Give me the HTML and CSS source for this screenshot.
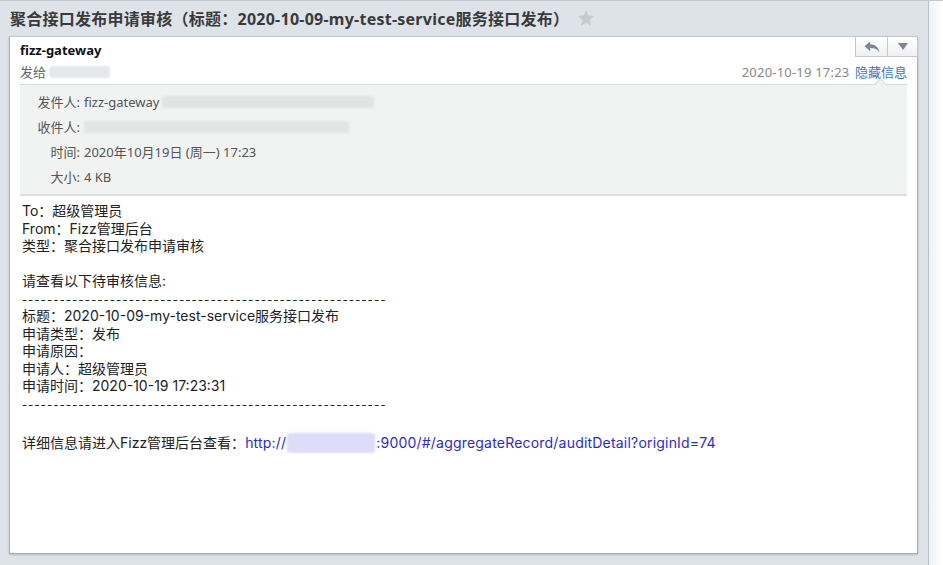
FILE: index.html
```html
<!DOCTYPE html>
<html lang="zh-CN">
<head>
<meta charset="utf-8">
<title>聚合接口发布申请审核</title>
<link rel="stylesheet" href="styles.css">
</head>
<body>
<div class="app">
  <div class="main">
    <div class="subject">
      <h1 class="subject-text">聚合接口发布申请审核（标题：2020-10-09-my-test-service服务接口发布）</h1>
      <svg class="star" width="18" height="18" viewBox="0 0 24 24"><path d="M12 1.5l3.1 7.2 7.8.7-5.9 5.1 1.8 7.7L12 18.2 5.2 22.2 7 14.5 1.1 9.4l7.8-.7z" fill="#c6cbd0"/></svg>
    </div>
    <div class="card">
      <div class="actions">
        <button class="act act-reply" type="button" aria-label="回复">
          <svg width="16" height="12" viewBox="0 0 16 12"><path d="M0.5 5.2L6.2 0.6V3.3C10.6 3.5 14.2 5.6 15.5 11.2 13.4 8.1 10.6 7 6.2 7.1V9.9z" fill="#7e8690"/></svg>
        </button>
        <button class="act act-more" type="button" aria-label="更多">
          <svg width="10" height="7" viewBox="0 0 10 7"><path d="M0 0h10L5 7z" fill="#7e8690"/></svg>
        </button>
      </div>
      <div class="meta">
        <div class="from-name">fizz-gateway</div>
        <div class="meta-row">
          <span class="to">发给 <span class="blur blur-to"></span></span>
          <span class="when">2020-10-19 17:23 <a class="toggle" href="#">隐藏信息</a></span>
        </div>
      </div>
      <div class="details">
        <span class="notch"></span>
        <div class="d-row"><span class="d-label">发件人:</span><span class="d-value">fizz-gateway<span class="blur blur-from"></span></span></div>
        <div class="d-row"><span class="d-label">收件人:</span><span class="d-value"><span class="blur blur-rcpt"></span></span></div>
        <div class="d-row"><span class="d-label">时间:</span><span class="d-value">2020年10月19日 (周一) 17:23</span></div>
        <div class="d-row"><span class="d-label">大小:</span><span class="d-value">4 KB</span></div>
      </div>
      <div class="body">
        <div class="line">To：超级管理员</div>
        <div class="line">From：Fizz管理后台</div>
        <div class="line">类型：聚合接口发布申请审核</div>
        <div class="line blank"></div>
        <div class="line">请查看以下待审核信息:</div>
        <div class="line rule">----------------------------------------------------------</div>
        <div class="line">标题：2020-10-09-my-test-service服务接口发布</div>
        <div class="line">申请类型：发布</div>
        <div class="line">申请原因：</div>
        <div class="line">申请人：超级管理员</div>
        <div class="line">申请时间：2020-10-19 17:23:31</div>
        <div class="line rule">----------------------------------------------------------</div>
        <div class="line blank"></div>
        <div class="line last">详细信息请进入Fizz管理后台查看：<a class="link" href="#">http://<span class="blur blur-host"></span>:9000/#/aggregateRecord/auditDetail?originId=74</a></div>
      </div>
    </div>
  </div>
  <div class="scrollbar"></div>
</div>
</body>
</html>
```

FILE: styles.css
```css
* { box-sizing: border-box; }
html, body { margin: 0; padding: 0; }
body {
  width: 943px;
  height: 565px;
  overflow: hidden;
  background: #dde3e9;
  font-family: "Noto Sans", "Noto Sans CJK SC", sans-serif;
  color: #222;
}
.app {
  display: flex;
  height: 565px;
  border-top: 1px solid #c3c9cf;
}
.main {
  flex: 1;
  display: flex;
  flex-direction: column;
  min-width: 0;
}
.subject {
  height: 35px;
  display: flex;
  align-items: center;
  padding-left: 10px;
  gap: 8px;
}
.subject-text {
  margin: 0;
  font-size: 16px;
  font-weight: 700;
  color: #3a3a3a;
  line-height: 20px;
  letter-spacing: 0.25px;
  white-space: nowrap;
}
.star { flex: none; margin-top: -1px; }
.card {
  position: relative;
  flex: 1;
  margin: 0 10px 11px 9px;
  background: #fff;
  border: 1px solid #a9aeb3;
  border-top-color: #c5cacf;
  box-shadow: 0 1px 2px rgba(0,0,0,0.18);
  padding: 0 10px;
}
.actions {
  position: absolute;
  top: -1px;
  right: -1px;
  display: flex;
  height: 21px;
}
.act {
  margin: 0;
  padding: 0;
  height: 21px;
  border: 1px solid #c4c8cc;
  background: linear-gradient(#ffffff, #eef0f2);
  display: flex;
  align-items: center;
  justify-content: center;
}
.act-reply { width: 33px; }
.act-more { width: 30px; border-left: none; }
.meta { padding-top: 4px; }
.from-name {
  font-size: 13px;
  font-weight: 700;
  line-height: 18px;
  color: #111;
  margin-bottom: 4px;
}
.meta-row {
  display: flex;
  justify-content: space-between;
  align-items: center;
  font-size: 13px;
  line-height: 18px;
  margin-bottom: 3px;
}
.to { color: #666; display: flex; align-items: center; gap: 3px; }
.when { color: #888; letter-spacing: 0.2px; }
.toggle { color: #3a78c4; text-decoration: none; margin-left: 2px; letter-spacing: 0; }
.blur {
  display: inline-block;
  vertical-align: middle;
  border-radius: 3px;
  filter: blur(1.2px);
}
.blur-to { width: 61px; height: 12px; background: #e6e7e8; }
.blur-from { width: 212px; height: 12px; background: #e2e4e4; margin-left: 3px; }
.blur-rcpt { width: 265px; height: 12px; background: #e3e5e5; }
.blur-host { width: 88px; height: 20px; background: #dedcf8; margin: 0 1px; vertical-align: -5px; filter: blur(0.8px); }
.details {
  position: relative;
  background: #f0f3f2;
  border-top: 1px solid #d5d8d8;
  border-bottom: 2px solid #dde0e0;
  padding: 4px 0 5px;
  font-size: 13px;
  color: #555;
}
.notch {
  position: absolute;
  top: -5px;
  right: 22px;
  width: 9px;
  height: 9px;
  background: #f0f3f2;
  border-top: 1px solid #d5d8d8;
  border-left: 1px solid #d5d8d8;
  transform: rotate(45deg);
}
.d-row {
  display: grid;
  grid-template-columns: 60px 1fr;
  column-gap: 4px;
  height: 25px;
  align-items: center;
  line-height: 18px;
}
.d-label { text-align: right; }
.d-value { display: flex; align-items: center; }
.body {
  padding: 6px 2px;
  font-family: "Inter", "Noto Sans CJK SC", sans-serif;
  font-size: 14px;
  line-height: 17.5px;
  color: #222;
}
.line { white-space: nowrap; height: 17.5px; }
.rule { font-family: "Noto Sans CJK SC", sans-serif; letter-spacing: 1.43px; }
.last { margin-top: 3px; }
.link { color: #2a2adb; text-decoration: none; letter-spacing: 0.2px; }
.scrollbar {
  flex: none;
  width: 15px;
  border-left: 1px solid #b9c0c6;
  background: linear-gradient(to right, #f0f2f4, #ffffff);
}
```
